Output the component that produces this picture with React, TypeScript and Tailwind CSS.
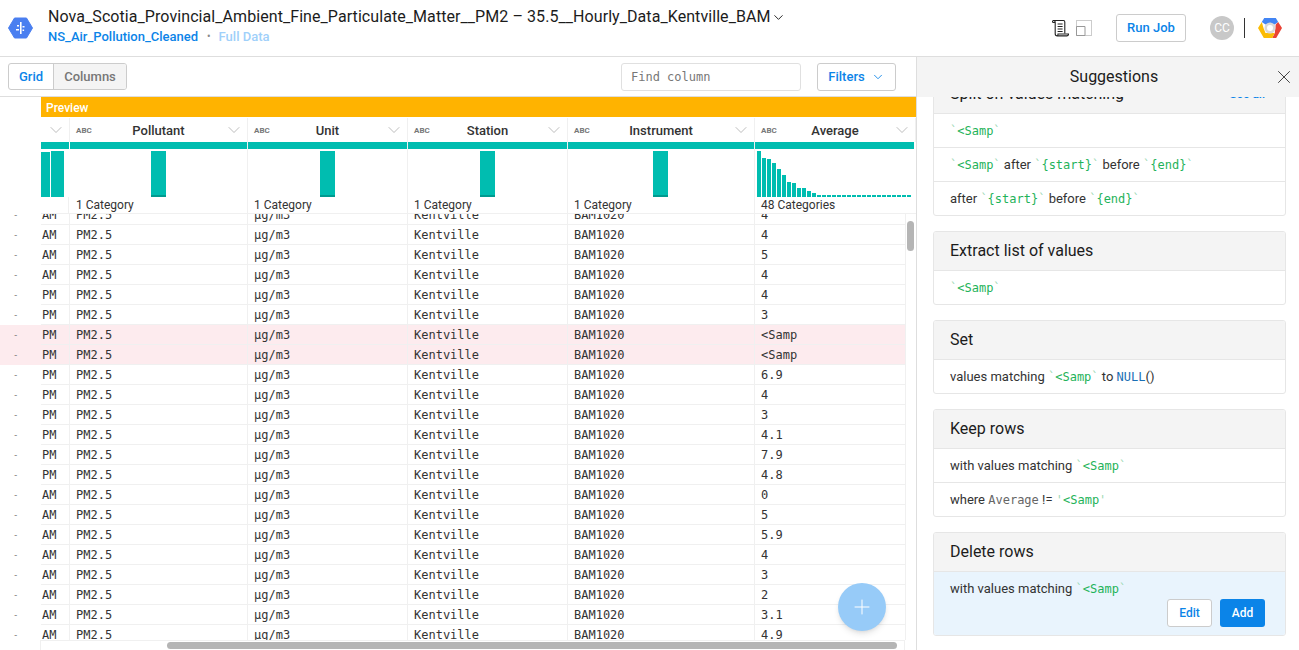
import { ChevronDown, Plus, X } from 'lucide-react'

const gridCols = 'grid grid-cols-[29px_178px_160px_160px_187px_1fr]'
const mono = "font-['DejaVu_Sans_Mono',monospace]"

const rows: [string, string][] = [
  ['AM', '4'], ['AM', '4'], ['AM', '5'], ['AM', '4'], ['PM', '4'], ['PM', '3'], ['PM', '<Samp'],
  ['PM', '<Samp'], ['PM', '6.9'], ['PM', '4'], ['PM', '3'], ['PM', '4.1'], ['PM', '7.9'], ['PM', '4.8'],
  ['AM', '0'], ['AM', '5'], ['AM', '5.9'], ['AM', '4'], ['AM', '3'], ['AM', '2'], ['AM', '3.1'], ['AM', '4.9'],
]

const columns = [
  { name: 'Pollutant', label: '1 Category' },
  { name: 'Unit', label: '1 Category' },
  { name: 'Station', label: '1 Category' },
  { name: 'Instrument', label: '1 Category' },
]

const averageBars = [46, 39, 38, 34, 28, 22, 15, 14, 9, 9, 6, 4, 2, 2, 2, 2, 2, 2, 2, 2, 2, 2, 2, 2, 2, 2, 2, 2, 2, 2, 2]

function Logo() {
  return (
    <svg width="25" height="22" viewBox="0 0 25 22">
      <path d="M6.5 1h12L24.5 11l-6 10h-12L.5 11z" fill="#4a7ff0" stroke="#4a7ff0" strokeLinejoin="round" />
      <path d="M12 5h1.6v12H12zM9 8h2v1.6H9zM14.5 9h2v1.6h-2zM8 12h3v1.6H8zM14.5 12.5h1.6v1.6h-1.6z" fill="#fff" />
    </svg>
  )
}

function CloudLogo() {
  return (
    <svg width="24" height="22" viewBox="0 0 24 22">
      <path d="M6.2 1h11.6l2.4 4-3.5 2.5H7.5L3.8 5z" fill="#4285f4" />
      <path d="M20.2 5 24 11l-5.8 10h-4l2.6-5 .9-8.5z" fill="#ea4335" />
      <path d="M3.8 5 0 11l5.8 10h8.4l2.6-5H7.5L5.5 11z" fill="#fbbc05" />
      <circle cx="12" cy="11" r="5.5" fill="#d9d9d9" />
      <circle cx="12" cy="11" r="3" fill="#fff" />
    </svg>
  )
}

function ScriptIcon() {
  return (
    <svg width="17" height="18" viewBox="0 0 17 18" fill="none" stroke="#222" strokeWidth="1.1">
      <path d="M1 1.5h10.5c.8 0 1.3.6 1.3 1.4V14.5" />
      <path d="M1 1.5c1.2 0 2.2.7 2.2 1.8V14.8c0 1.2.9 2.1 2.1 2.1H14.8c1 0 1.7-.8 1.7-1.9H6c0 1-.3 1.9-.9 1.9" />
      <path d="M1 1.5c-.5.6-.5 1.5 0 2h2" />
      <path d="M5.6 5h5M5.6 7.5h5M5.6 10h5M5.6 12.5h5" />
    </svg>
  )
}

function LayoutIcon() {
  return (
    <svg width="16" height="16" viewBox="0 0 16 16" fill="none">
      <rect x="0.5" y="0.5" width="15" height="15" stroke="#999" strokeDasharray="1 1" />
      <path d="M.5 6.5h8.5v9H.5z" stroke="#999" />
    </svg>
  )
}

function Str({ v, q = '`' }: { v: string; q?: string }) {
  return (
    <span className={`${mono} text-[12px] text-[#1fb35a]`}>
      <span className="text-[#9bd8b3]">{q}</span>
      {v}
      <span className="text-[#9bd8b3]">{q}</span>
    </span>
  )
}

function SuggestionRow({ children }: { children: React.ReactNode }) {
  return (
    <div className="h-[34px] border-t border-[#e6e6e6] px-[16px] leading-[34px] text-[13px] text-[#333] whitespace-pre">
      {children}
    </div>
  )
}

function Card({ title, children, extra }: { title: string; children: React.ReactNode; extra?: React.ReactNode }) {
  return (
    <div className="mb-[15px] rounded-[3px] border border-[#e6e6e6] overflow-hidden">
      <div className="h-[38px] bg-[#f4f4f4] px-[16px] pr-[20px] flex items-center justify-between text-[16px] text-[#1c1c1c]">
        {title}
        {extra}
      </div>
      {children}
    </div>
  )
}

function Histogram({ nudge }: { nudge: boolean }) {
  return (
    <div className={`h-[48px] flex items-end justify-center ${nudge ? 'pr-[1px]' : ''}`}>
      <div className="w-[15px] h-[46px] bg-[#00bdb0] border-b-2 border-[#009a8f]" />
    </div>
  )
}

function ColumnHeader({ name }: { name: string }) {
  return (
    <div className="h-[24px] pt-[1px] border-r border-[#f0f0f0] relative flex items-center justify-center text-[13px] font-medium text-[#333]">
      <span className="absolute left-[6px] top-[7px] text-[8px] font-bold text-[#777]">ABC</span>
      {name}
      <ChevronDown className="absolute right-[3px] top-[2px] w-[20px] h-[20px] text-[#b0b0b0]" strokeWidth={1} />
    </div>
  )
}

export default function App() {
  return (
    <div className="w-[1299px] h-[650px] overflow-hidden relative bg-white flex flex-col font-['Roboto',sans-serif]">
      <header className="h-[57px] shrink-0 border-b border-[#dedede] flex items-center pl-[8px] pr-[17px]">
        <Logo />
        <div className="ml-[15px] flex-1 -mt-[4px]">
          <div className="flex items-center text-[16px] tracking-[0.07px] leading-[20px] text-[#1c1c1c]">
            Nova_Scotia_Provincial_Ambient_Fine_Particulate_Matter__PM2 – 35.5__Hourly_Data_Kentville_BAM
            <ChevronDown className="w-[15px] h-[15px]" strokeWidth={1.5} />
          </div>
          <div className="mt-[2px] flex items-center text-[13px] font-medium leading-[16px] text-[#0b84e8]">
            NS_Air_Pollution_Cleaned
            <span className="ml-[9px] mr-[8px] text-[#8a8a8a] text-[10px]">•</span>
            <span className="text-[#9fd0fa]">Full Data</span>
          </div>
        </div>
        <ScriptIcon />
        <div className="ml-[7px]"><LayoutIcon /></div>
        <button className="ml-[24px] w-[70px] h-[28px] rounded-[3px] border border-[#ccc] text-[13px] font-medium text-[#0b84e8]">
          Run Job
        </button>
        <div className="ml-[24px] w-[24px] h-[24px] rounded-full bg-[#c8c8c8] text-white text-[12px] flex items-center justify-center">
          CC
        </div>
        <div className="ml-[10px] w-px h-[20px] bg-[#333]" />
        <div className="ml-[13px]"><CloudLogo /></div>
      </header>

      <div className="flex-1 flex min-h-0">
        <main className="w-[917px] shrink-0 border-r border-[#dedede] flex flex-col relative">
          <div className="h-[40px] shrink-0 border-b border-[#dedede] pl-[8px] pr-[20px] flex items-center">
            <div className="flex h-[27px] rounded-[3px] border border-[#ccc] text-[13px] font-medium overflow-hidden">
              <div className="w-[44px] flex items-center justify-center text-[#0b84e8]">Grid</div>
              <div className="w-[73px] flex items-center justify-center border-l border-[#ccc] bg-[#f4f4f4] text-[#777]">Columns</div>
            </div>
            <div className={`ml-auto w-[180px] h-[28px] rounded-[3px] border border-[#e0e0e0] px-[9px] pt-[1px] flex items-center text-[12px] text-[#777] ${mono}`}>
              Find column
            </div>
            <button className="ml-[16px] w-[79px] h-[28px] rounded-[3px] border border-[#ccc] flex items-center justify-center gap-[6px] text-[13px] font-medium text-[#0b84e8]">
              Filters
              <ChevronDown className="w-[14px] h-[14px]" strokeWidth={1.5} />
            </button>
          </div>

          <div className="flex-1 flex flex-col min-h-0 pl-[41px]">
            <div className="h-[20px] pt-[1px] shrink-0 bg-[#ffb300] text-white text-[12px] font-medium px-[5px] flex items-center">Preview</div>
            <div className={`${gridCols} mt-[1px] shrink-0`}>
              <div className="h-[24px] border-r border-[#f0f0f0] relative">
                <ChevronDown className="absolute right-[3px] top-[2px] w-[20px] h-[20px] text-[#b0b0b0]" strokeWidth={1} />
              </div>
              {columns.map((c) => <ColumnHeader key={c.name} name={c.name} />)}
              <ColumnHeader name="Average" />
            </div>
            <div className={`${gridCols} shrink-0 border-b border-[#f0f0f0]`}>
              <div className="border-r border-white">
                <div className="h-[7px] bg-[#00bdb0]" />
                <div className="h-[48px] flex items-end gap-px">
                  <div className="w-[9px] h-[45px] bg-[#00bdb0]" />
                  <div className="w-[13px] h-[46px] bg-[#00bdb0]" />
                </div>
                <div className="h-[16px] border-r border-[#f0f0f0]" />
              </div>
              {columns.map((c) => (
                <div key={c.name} className="border-r border-[#f0f0f0]">
                  <div className="h-[7px] bg-[#00bdb0]" />
                  <Histogram nudge={c.name === 'Instrument'} />
                  <div className="h-[16px] px-[6px] text-[12px] leading-[16px] text-[#333]">{c.label}</div>
                </div>
              ))}
              <div className="mr-[2px]">
                <div className="h-[7px] bg-[#00bdb0]" />
                <div className="h-[48px] pl-[2px] flex items-end gap-px">
                  {averageBars.map((h, i) => (
                    <div key={i} className="w-[4px] bg-[#00bdb0]" style={{ height: h }} />
                  ))}
                </div>
                <div className="h-[16px] px-[6px] text-[12px] leading-[16px] text-[#333]">48 Categories</div>
              </div>
            </div>
            <div className={`h-[426px] shrink-0 overflow-hidden -ml-[41px] w-[906px] ${mono} text-[12px] text-[#333]`}>
              <div className="-mt-[9px]">
                {rows.map(([ampm, avg], i) => (
                  <div key={i} className={`flex h-[20px] ${avg === '<Samp' ? 'bg-[#fdebee]' : ''}`}>
                    <div className="w-[41px] shrink-0 pl-[13px] text-[9px] leading-[21px] text-[#777]">-</div>
                    <div className={`${gridCols} flex-1 leading-[21px] border-b border-r border-[#f0f0f0]`}>
                      <div className="pl-[1px] border-r border-[#f0f0f0]">{ampm}</div>
                      <div className="pl-[6px] border-r border-[#f0f0f0]">PM2.5</div>
                      <div className="pl-[6px] border-r border-[#f0f0f0]">µg/m3</div>
                      <div className="pl-[6px] border-r border-[#f0f0f0]">Kentville</div>
                      <div className="pl-[6px] border-r border-[#f0f0f0]">BAM1020</div>
                      <div className="pl-[6px]">{avg}</div>
                    </div>
                  </div>
                ))}
              </div>
            </div>
            <div className="h-[10px] shrink-0 w-[865px] border-t border-x border-[#f0f0f0] -ml-px" />
          </div>

          <div className="absolute left-[907px] top-[164px] w-[7px] h-[30px] rounded-full bg-[#b5b5b5]" />
          <div className="absolute left-[167px] bottom-[1px] w-[730px] h-[7px] rounded-full bg-[#b5b5b5]" />
          <div className="absolute left-[838px] top-[526px] w-[48px] h-[48px] rounded-full bg-[#97cbf8] shadow-md flex items-center justify-center text-white">
            <Plus className="w-[24px] h-[24px]" strokeWidth={1} />
          </div>
        </main>

        <aside className="flex-1 flex flex-col min-w-0">
          <div className="h-[40px] shrink-0 pl-[12px] bg-[#f4f4f4] relative flex items-center justify-center text-[16px] text-[#1c1c1c]">
            Suggestions
            <X className="absolute right-[4px] top-[9px] w-[22px] h-[22px] text-[#333]" strokeWidth={1} />
          </div>
          <div className="flex-1 min-h-0 overflow-hidden pl-[16px] pr-[13px]">
            <div className="-mt-[23px]">
              <Card title="Split on values matching" extra={<span className="text-[12px] font-medium text-[#0b84e8]">See all</span>}>
                <SuggestionRow><Str v="<Samp" /></SuggestionRow>
                <SuggestionRow><Str v="<Samp" /> after <Str v="{start}" /> before <Str v="{end}" /></SuggestionRow>
                <SuggestionRow>after <Str v="{start}" /> before <Str v="{end}" /></SuggestionRow>
              </Card>
              <Card title="Extract list of values">
                <SuggestionRow><Str v="<Samp" /></SuggestionRow>
              </Card>
              <Card title="Set">
                <SuggestionRow>
                  values matching <Str v="<Samp" /> to <span className={`${mono} text-[12px] text-[#1a6fb5]`}>NULL</span>()
                </SuggestionRow>
              </Card>
              <Card title="Keep rows">
                <SuggestionRow>with values matching <Str v="<Samp" /></SuggestionRow>
                <SuggestionRow>where <span className={`${mono} text-[12px] text-[#666]`}>Average</span> != <Str v="<Samp" q="'" /></SuggestionRow>
              </Card>
              <Card title="Delete rows">
                <div className="h-[64px] border-t border-[#e6e6e6] bg-[#e9f4fd] pl-[16px] pr-[20px] pt-[7px] text-[13px] text-[#333]">
                  <div className="whitespace-pre">with values matching <Str v="<Samp" /></div>
                  <div className="flex justify-end gap-[8px]">
                    <button className="w-[45px] h-[28px] rounded-[3px] border border-[#ccc] bg-white text-[12px] font-medium text-[#0b84e8]">Edit</button>
                    <button className="w-[45px] h-[28px] rounded-[3px] bg-[#0b84e8] text-[12px] font-medium text-white">Add</button>
                  </div>
                </div>
              </Card>
            </div>
          </div>
        </aside>
      </div>
    </div>
  )
}
